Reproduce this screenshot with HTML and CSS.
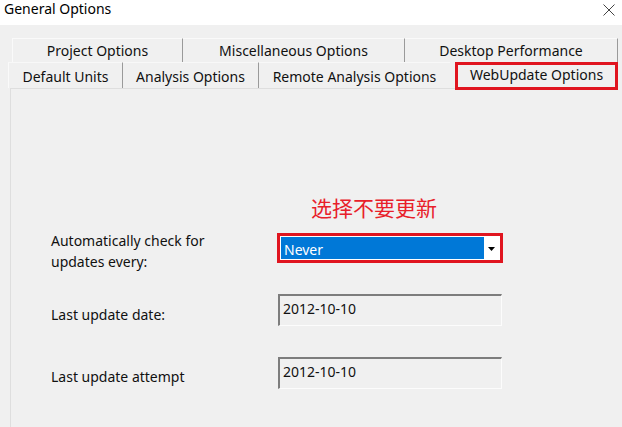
FILE: index.html
```html
<!DOCTYPE html>
<html>
<head>
<meta charset="utf-8">
<link rel="stylesheet" href="styles.css">
</head>
<body>
<div class="window">
  <div class="titlebar">
    <span class="title">General Options</span>
    <svg class="close" width="14" height="14" viewBox="0 0 14 14"><path d="M1.5 1.5L12.5 12.5M12.5 1.5L1.5 12.5" stroke="#444" stroke-width="1" fill="none"/></svg>
  </div>
  <div class="content">
    <div class="tabrow row1">
      <div class="tab t-proj">Project Options</div>
      <div class="tab t-misc">Miscellaneous Options</div>
      <div class="tab t-desk">Desktop Performance</div>
    </div>
    <div class="tabrow row2">
      <div class="tab t-units">Default Units</div>
      <div class="tab t-anal">Analysis Options</div>
      <div class="tab t-remote">Remote Analysis Options</div>
      <div class="tab t-web selected">WebUpdate Options</div>
    </div>
    <div class="panel">
      <div class="hint">选择不要更新</div>
      <div class="row row-a">
        <div class="label">Automatically check for<br>updates every:</div>
        <div class="combo">
          <div class="combo-inner">
            <span class="combo-value">Never</span>
            <span class="combo-arrow"><svg width="7" height="4" viewBox="0 0 7 4"><path d="M0 0H7L3.5 4Z" fill="#000"/></svg></span>
          </div>
        </div>
      </div>
      <div class="row row-b">
        <div class="label">Last update date:</div>
        <div class="field">2012-10-10</div>
      </div>
      <div class="row row-c">
        <div class="label">Last update attempt</div>
        <div class="field">2012-10-10</div>
      </div>
    </div>
  </div>
</div>
</body>
</html>
```
FILE: styles.css
```css
html, body {
  margin: 0;
  padding: 0;
}
body {
  width: 622px;
  height: 427px;
  overflow: hidden;
  font-family: "Noto Sans", "Open Sans", sans-serif;
  color: #111;
}
.window {
  width: 622px;
  height: 427px;
  display: flex;
  flex-direction: column;
}
.titlebar {
  height: 25px;
  background: #ffffff;
  display: flex;
  justify-content: space-between;
  align-items: flex-start;
  flex-shrink: 0;
}
.title {
  font-size: 14px;
  line-height: 18px;
  padding-left: 4px;
  color: #000;
}
.close {
  margin: 3px 6px 0 0;
}
.content {
  flex: 1;
  background: #f0f0f0;
  display: flex;
  flex-direction: column;
}
.tabrow {
  display: flex;
  align-items: flex-start;
  font-size: 14px;
  color: #111;
}
.row1 {
  margin-top: 13px;
  margin-left: 12px;
  height: 24px;
}
.row2 {
  margin-left: 8px;
  height: 26px;
}
.tab {
  box-sizing: border-box;
  text-align: center;
  white-space: nowrap;
}
.row1 .tab {
  height: 24px;
  line-height: 24px;
  border-top: 1px solid #fafafa;
  border-right: 1px solid #9a9a9a;
}
.row1 .t-proj { width: 171px; border-left: 1px solid #fafafa; }
.row1 .t-misc { width: 222px; }
.row1 .t-desk { width: 213px; }
.row2 .tab {
  height: 26px;
  line-height: 27px;
  border-top: 1px solid #f8f8f8;
  border-right: 1px solid #9a9a9a;
}
.row2 .t-units { width: 115px; border-left: 1px solid #fafafa; }
.row2 .t-anal { width: 136px; }
.row2 .t-remote { width: 191px; border-right: none; }
.row2 .t-web {
  margin-left: 5px;
  width: 163px;
  height: 28px;
  line-height: 19px;
  border: 3px solid #e0151f;
  position: relative;
  z-index: 1;
  background: #f0f0f0;
}
.panel {
  flex: 1;
  margin-left: 10px;
  margin-right: 4px;
  border-left: 1px solid #dedede;
  border-top: 1px solid #dedede;
  padding: 106px 0 0 40px;
  display: flex;
  flex-direction: column;
  font-size: 14px;
}
.hint {
  margin-left: 260px;
  font-family: "Noto Sans CJK SC", sans-serif;
  font-size: 21px;
  line-height: 24px;
  color: #e8202a;
}
.row {
  display: grid;
  grid-template-columns: 226px 226px;
  align-items: start;
}
.row-a { margin-top: 11px; }
.row-b { margin-top: 22px; }
.row-c { margin-top: 31px; }
.label {
  line-height: 21px;
  color: #111;
}
.row-b .label { padding-top: 10px; }
.row-c .label { padding-top: 9px; }
.combo {
  margin-top: 3px;
  box-sizing: border-box;
  width: 226px;
  height: 30px;
  border: 3px solid #e0151f;
  padding: 1px;
  background: #ffffff;
}
.combo-inner {
  display: flex;
  height: 100%;
  background: #0078d7;
}
.combo-value {
  flex: 1;
  color: #ffffff;
  line-height: 20px;
  padding: 3px 0 0 3px;
}
.combo-arrow {
  width: 15px;
  background: #ffffff;
  display: flex;
  align-items: center;
  justify-content: center;
  padding-top: 2px;
}
.field {
  box-sizing: border-box;
  width: 224px;
  margin-left: 1px;
  height: 32px;
  border-top: 2px solid #7d7d7d;
  border-left: 2px solid #7d7d7d;
  border-right: 1px solid #fcfcfc;
  border-bottom: 1px solid #fcfcfc;
  padding: 3px 0 0 3px;
  line-height: 20px;
  color: #111;
}
```
